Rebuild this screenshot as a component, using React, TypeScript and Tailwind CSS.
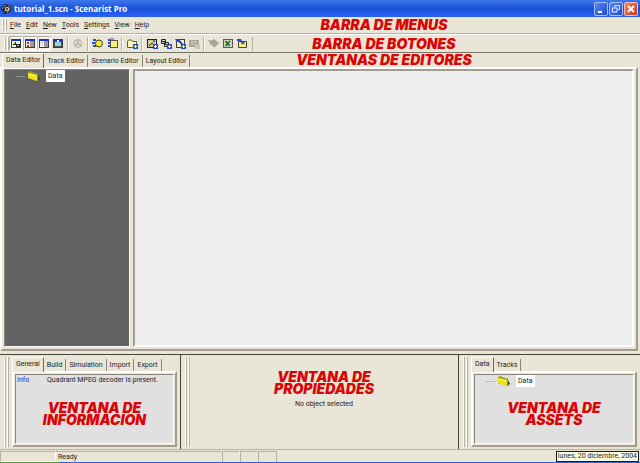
import { useState, type ReactNode } from 'react'
import clsx from 'clsx'

const MENUS = ['File', 'Edit', 'New', 'Tools', 'Settings', 'View', 'Help']

const EDITOR_TABS = ['Data Editor', 'Track Editor', 'Scenario Editor', 'Layout Editor']
const INFO_TABS = ['General', 'Build', 'Simulation', 'Import', 'Export']
const ASSET_TABS = ['Data', 'Tracks']

const Badge = () => (
  <>
    <rect x="7" y="6" width="5" height="5" fill="#2548e8" />
    <path d="M8 8.5h3M9.5 7v3" stroke="#fff" />
  </>
)

const WindowFrame = ({ children }: { children: ReactNode }) => (
  <>
    <rect x="1" y="1" width="10" height="9" fill="#3a3a3a" />
    <rect x="2" y="3" width="8" height="6" fill="#f4f4ee" />
    <rect x="1" y="1" width="10" height="2" fill="#1434c8" />
    {children}
  </>
)

interface Tool {
  label: string
  pressed?: boolean
  disabled?: boolean
  art: ReactNode
}

const TOOL_GROUPS: Tool[][] = [
  [
    {
      label: 'Editors window',
      pressed: true,
      art: (
        <WindowFrame>
          <path d="M3 4h3v3h-3zM6 6h4v3h-4z" fill="#1c1c1c" />
          <path d="M3 4h2v2h-2zM7 7h2v1h-2z" fill="#f2e21c" />
        </WindowFrame>
      ),
    },
    {
      label: 'Assets window',
      pressed: true,
      art: (
        <WindowFrame>
          <path d="M6 3h4v6h-4z" fill="#9b9b9b" />
          <path d="M3 4h2v2h-2zM3 7h2v2h-2z" fill="#e01a1a" />
        </WindowFrame>
      ),
    },
    {
      label: 'Properties window',
      pressed: true,
      art: (
        <WindowFrame>
          <path d="M6 3h4v6h-4z" fill="#9b9b9b" />
          <path d="M3 4.5h2M3 6.5h2" stroke="#b9b9b0" />
        </WindowFrame>
      ),
    },
    {
      label: 'Simulation window',
      art: (
        <WindowFrame>
          <path d="M2 3h8v6h-8z" fill="#55534a" />
          <rect x="3" y="4" width="6" height="4" fill="#8fd0ee" />
          <path d="M5 2h2v2h-2z" fill="#fff" />
        </WindowFrame>
      ),
    },
  ],
  [
    {
      label: 'Compile',
      disabled: true,
      art: (
        <g stroke="#b8b5a6" fill="none">
          <circle cx="6" cy="5.5" r="4" fill="#dedbcd" />
          <path d="M6 5.5v-4M6 5.5l3.4 2.4M6 5.5l-3.4 2.4" strokeWidth="1.4" />
        </g>
      ),
    },
  ],
  [
    {
      label: 'New disc',
      art: (
        <>
          <path d="M1 2h3M0 5h3M1 8h3" stroke="#2548e8" strokeWidth="2" />
          <circle cx="7" cy="5.5" r="3.5" fill="#f7ec2a" stroke="#3b3a1c" />
        </>
      ),
    },
    {
      label: 'New title',
      art: (
        <>
          <rect x="4.5" y="2.5" width="7" height="7" fill="#f6ee7a" stroke="#55533a" />
          <path d="M3 1v9" stroke="#2548e8" strokeWidth="2" strokeDasharray="2 1" />
          <path d="M4 1h4" stroke="#2548e8" />
        </>
      ),
    },
  ],
  [
    {
      label: 'New folder',
      art: (
        <>
          <path d="M1.5 9.5v-6l1-1.500h3l1 1.500h4v6z" fill="#fbf7b4" stroke="#5c5a3a" />
          <Badge />
        </>
      ),
    },
  ],
  [
    {
      label: 'New picture',
      art: (
        <>
          <rect x="1.5" y="1.5" width="9" height="8" fill="#c9c7b0" stroke="#24241c" />
          <path d="M3 3h3v2h-3zM6 5h3v2h-3z" fill="#f2e21c" />
          <path d="M3 8l3-3l3 3M7 3h2" stroke="#24241c" fill="none" />
          <Badge />
        </>
      ),
    },
    {
      label: 'New track',
      art: (
        <>
          <path d="M1.5 1.5h4v4h-4zM4.5 4.5h4v4h-4z" fill="#d8d6c6" stroke="#24241c" />
          <path d="M2 3.5h4M5 6.5h3" stroke="#24241c" />
          <Badge />
        </>
      ),
    },
    {
      label: 'New scenario',
      art: (
        <>
          <rect x="2.5" y="1.5" width="8" height="8" fill="#f3f0c0" stroke="#44432c" />
          <path d="M1 1h5v1.500l3 3l-1.500 1.500l-3-3h-2z" fill="#2548e8" />
          <Badge />
        </>
      ),
    },
    {
      label: 'New layout',
      disabled: true,
      art: (
        <>
          <rect x="1" y="2" width="10" height="7" fill="#a9a698" />
          <path d="M3 4h6M3 6h3" stroke="#d8d5c6" />
          <rect x="7" y="6" width="5" height="5" fill="#c9c6b8" />
        </>
      ),
    },
  ],
  [
    {
      label: 'Link',
      disabled: true,
      art: <path d="M0 2l3 .5l3-1.500l5 4l-4.500 4.500l-4-3z" fill="#a9a698" />,
    },
    {
      label: 'Export sheet',
      art: (
        <>
          <rect x="1.5" y="1.5" width="9" height="8" fill="#cdd3c0" stroke="#5a5a50" />
          <path d="M3.5 3l4 5M8 3l-4.500 5" stroke="#1f6b28" strokeWidth="1.6" />
        </>
      ),
    },
    {
      label: 'Import folder',
      art: (
        <>
          <path d="M2.5 9.5v-6h8v6z" fill="#fbf07a" stroke="#44432c" />
          <path d="M1 1h4l1 2l1 1v-1.500l2 3l-3.500 1v-1.500l-2-2h-2.500z" fill="#2548e8" />
        </>
      ),
    },
  ],
]

// red captions laid over the windows
function Caption({ children }: { children: ReactNode }) {
  return (
    <p className="whitespace-nowrap text-center font-['Inter'] text-[14px] font-black italic leading-[12px] text-[#dc0404]">
      {children}
    </p>
  )
}

function BarCaption({ children }: { children: ReactNode }) {
  return (
    <div className="pointer-events-none absolute inset-y-0 left-[60%] z-10 flex -translate-x-1/2 items-center">
      <Caption>{children}</Caption>
    </div>
  )
}

function Grip() {
  return (
    <div className="flex shrink-0 gap-px self-stretch" aria-hidden="true">
      <span className="w-[2px] border-l border-r border-l-white border-r-[#b5b2a1]" />
      <span className="w-[2px] border-l border-r border-l-white border-r-[#b5b2a1]" />
    </div>
  )
}

function Tabs({ label, items }: { label: string; items: string[] }) {
  const [active, setActive] = useState(0)
  return (
    <div role="tablist" aria-label={label} className="flex h-[14px] items-stretch">
      {items.map((item, i) => (
        <button
          key={item}
          role="tab"
          aria-selected={i === active}
          onClick={() => setActive(i)}
          className={clsx(
            'border-r px-[3px] leading-[12px]',
            i === active
              ? 'relative -mb-px border-l border-t border-l-white border-t-white border-r-[#6e6c60] bg-[#e9e6d7] pb-[2px]'
              : 'mt-[2px] border-r-[#8a8778]',
          )}
        >
          {item}
        </button>
      ))}
    </div>
  )
}

function FolderIcon() {
  return (
    <svg width="14" height="12" viewBox="0 0 14 12" aria-hidden="true">
      <path d="M10 3l3 6l-3 2z" fill="#3c3a12" />
      <path d="M1 2l3-1l1 1l6 2v7l-10-3z" fill="#a39a08" />
      <path d="M1 3l9 2v6l-9-3z" fill="#ece21c" />
      <path d="M2 4l7 2" stroke="#fbf88a" />
    </svg>
  )
}

function TreeRoot({ dark }: { dark?: boolean }) {
  return (
    <div className="flex items-center pl-[11px]">
      <span className={clsx('w-[9px] border-t', dark ? 'border-[#8b8b8b]' : 'border-[#bdbdbd]')} />
      <span className="ml-[2px]">
        <FolderIcon />
      </span>
      <button className="ml-[5px] h-[12px] bg-white px-[2px] leading-[12px]">Data</button>
    </div>
  )
}

function TitleBar() {
  return (
    <header className="flex h-[17px] shrink-0 items-center bg-linear-to-b from-[#3f78ee] via-[#1c50d8] to-[#2a62f6] pl-[1px] pr-[2px] text-white">
      <svg width="11" height="12" viewBox="0 0 11 12" aria-hidden="true">
        <path d="M0 5l4-4l6 1l1 3l-3 5l-5 1z" fill="#1e2230" />
        <path d="M1 6l4-4M3 9l6-7M6 10l4-6" stroke="#c8c6b4" strokeWidth=".8" />
        <circle cx="6" cy="6" r="2" fill="#e8e4cc" />
        <circle cx="6" cy="6" r="1" fill="#1e2230" />
      </svg>
      <h1 className="ml-[2px] flex-1 font-['Open_Sans'] text-[8px] font-bold">tutorial_1.scn - Scenarist Pro</h1>
      <div className="flex gap-px">
        <button aria-label="Minimize" className="size-[14px] rounded-[2px] border border-[#a9c0f8] bg-linear-to-br from-[#5a86f4] to-[#1e48cc]">
          <svg viewBox="0 0 12 12" aria-hidden="true">
            <path d="M3 9h4" stroke="#fff" strokeWidth="2" />
          </svg>
        </button>
        <button aria-label="Restore" className="size-[14px] rounded-[2px] border border-[#a9c0f8] bg-linear-to-br from-[#5a86f4] to-[#1e48cc]">
          <svg viewBox="0 0 12 12" fill="none" stroke="#dfe8ff" aria-hidden="true">
            <path d="M5 4.5v-2h4.500v4h-2" />
            <rect x="2.5" y="5" width="4.5" height="4" />
          </svg>
        </button>
        <button aria-label="Close" className="size-[14px] rounded-[2px] border border-[#f0c0b0] bg-linear-to-br from-[#ee8a68] to-[#c8360e]">
          <svg viewBox="0 0 12 12" aria-hidden="true">
            <path d="M3 3l6 6M9 3l-6 6" stroke="#fff" strokeWidth="1.8" />
          </svg>
        </button>
      </div>
    </header>
  )
}

function MenuBar() {
  return (
    <nav aria-label="Menu" className="relative flex h-[17px] shrink-0 items-center border-b border-[#b5b2a1] py-[2px] pl-[2px]">
      <Grip />
      {MENUS.map((m) => (
        <button key={m} className="pl-[3px] pr-[2px]">
          <span className="underline">{m[0]}</span>
          {m.slice(1)}
        </button>
      ))}
      <BarCaption>BARRA DE MENUS</BarCaption>
    </nav>
  )
}

function ToolBar() {
  return (
    <div role="toolbar" aria-label="Buttons" className="relative flex h-[19px] shrink-0 items-center border-b border-t border-b-[#77756a] border-t-white py-[2px] pl-[4px]">
      <Grip />
      {TOOL_GROUPS.map((group, g) => (
        <div key={g} className="flex items-center">
          {g > 0 && <span className="mx-[2px] h-[14px] w-[2px] border-l border-r border-l-[#b5b2a1] border-r-white" />}
          {group.map((t) => (
            <button
              key={t.label}
              aria-label={t.label}
              aria-pressed={t.pressed}
              disabled={t.disabled}
              className={clsx(
                'flex h-[15px] w-[14px] items-center justify-center border',
                t.pressed ? 'border-b-white border-l-[#b5b2a1] border-r-white border-t-[#b5b2a1] bg-[#f4f2e8]' : 'border-transparent',
              )}
            >
              <svg className="shrink-0" width="12" height="11" viewBox="0 0 12 11" aria-hidden="true">
                {t.art}
              </svg>
            </button>
          ))}
        </div>
      ))}
      <span className="ml-[3px] h-[14px] border-l border-[#b5b2a1]" />
      <BarCaption>BARRA DE BOTONES</BarCaption>
    </div>
  )
}

function Editors() {
  return (
    <main className="relative flex min-h-0 flex-1 flex-col border-b border-[#45433a]">
      <div className="relative px-[2px]">
        <Tabs label="Editors" items={EDITOR_TABS} />
        <BarCaption>VENTANAS DE EDITORES</BarCaption>
      </div>
      <div className="mb-[3px] mr-[2px] flex min-h-0 flex-1 gap-[3px] border-2 border-b-[#a19e8f] border-l-white border-r-[#a19e8f] border-t-white px-[2px] pb-[2px]">
        <div className="w-[126px] shrink-0 border border-b-white border-l-[#8a8778] border-r-white border-t-[#8a8778] bg-[#636363]">
          <TreeRoot dark />
        </div>
        <div className="flex-1 border-2 border-b-white border-l-[#a19e8f] border-r-white border-t-[#a19e8f] bg-[#eeeeef]" />
      </div>
    </main>
  )
}

function Dock({ label, tabs, children }: { label: string; tabs: string[]; children: ReactNode }) {
  return (
    <section aria-label={label} className="flex gap-[3px] pb-[2px] pl-[4px] pr-[3px] pt-[2px]">
      <Grip />
      <div className="flex min-w-0 flex-1 flex-col">
        <Tabs label={label} items={tabs} />
        <div className="flex flex-1 border-2 border-b-[#a19e8f] border-l-white border-r-[#a19e8f] border-t-white p-px">
          <div className="flex flex-1 flex-col border border-b-white border-l-[#8a8778] border-r-white border-t-[#8a8778] bg-[#e0e0e1]">
            {children}
          </div>
        </div>
      </div>
    </section>
  )
}

function StatusBar() {
  return (
    <footer className="flex h-[13px] shrink-0 items-stretch border-t border-[#b5b2a1] pt-px">
      <span className="w-[56px] border border-b-white border-l-[#b5b2a1] border-r-white border-t-[#b5b2a1]" />
      <span className="w-[165px] border-t border-[#b5b2a1] pl-[2px]">Ready</span>
      <span className="ml-px w-[17px] border-l border-t border-[#b5b2a1]" />
      <span className="ml-px w-[17px] border-l border-t border-[#b5b2a1]" />
      <span className="ml-px w-[19px] border-l border-r border-t border-[#b5b2a1]" />
      <time className="ml-auto mr-px whitespace-nowrap border border-[#1c1c1c] bg-[#fdfde4] px-px leading-[9px]">
        lunes, 20 diciembre, 2004
      </time>
    </footer>
  )
}

export default function App() {
  return (
    <div className="flex h-screen flex-col overflow-hidden bg-[#e9e6d7] font-['Roboto',sans-serif] text-[7px] leading-[10px] text-[#1c1c1c]">
      <TitleBar />
      <MenuBar />
      <ToolBar />
      <Editors />

      <div className="grid h-[94px] shrink-0 grid-cols-[181px_1fr_181px] divide-x divide-[#45433a]">
        <Dock label="Information" tabs={INFO_TABS}>
          <div className="flex px-px">
            <span className="w-[30px] text-[#1c1cf0]">Info</span>
            <span>Quadrant MPEG decoder is present.</span>
          </div>
          <div className="flex flex-1 items-center justify-center">
            <Caption>
              VENTANA DE
              <br />
              INFORMACION
            </Caption>
          </div>
        </Dock>

        <section aria-label="Properties" className="flex pb-[2px] pl-[4px] pt-[2px]">
          <Grip />
          <div className="flex flex-1 flex-col items-center gap-[4px] pt-[14px]">
            <Caption>
              VENTANA DE
              <br />
              PROPIEDADES
            </Caption>
            <p>No object selected</p>
          </div>
        </section>

        <Dock label="Assets" tabs={ASSET_TABS}>
          <TreeRoot />
          <div className="flex flex-1 items-center justify-center pb-[2px]">
            <Caption>
              VENTANA DE
              <br />
              ASSETS
            </Caption>
          </div>
        </Dock>
      </div>

      <StatusBar />
      <div className="flex h-px shrink-0 bg-[#2f63e6]">
        <span className="w-[60px] bg-[#4c9a3c]" />
      </div>
    </div>
  )
}
